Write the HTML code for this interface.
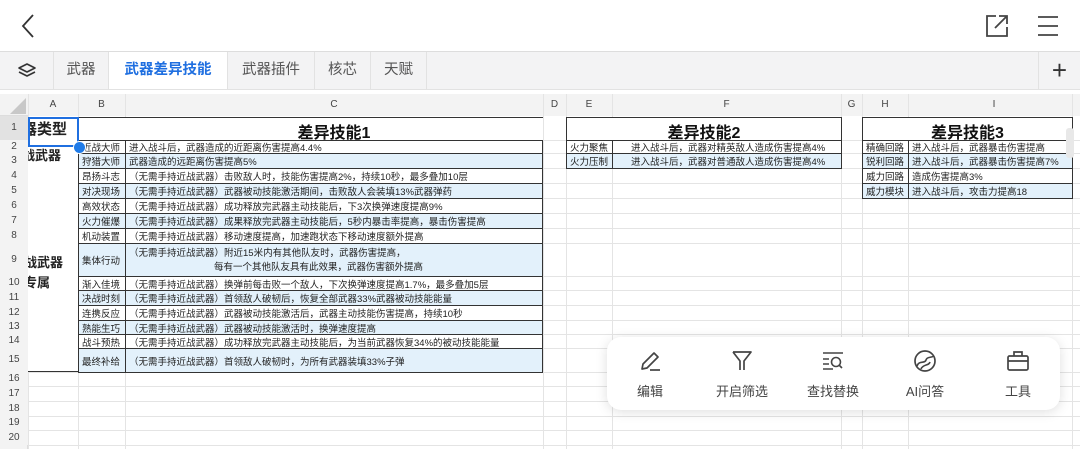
<!DOCTYPE html>
<html><head><meta charset="utf-8">
<style>
*{margin:0;padding:0;box-sizing:border-box}
body{width:1080px;height:449px;overflow:hidden;background:#fff;font-family:"Liberation Sans","Noto Sans CJK SC",sans-serif;position:relative;color:#222}
.a{position:absolute}
.h{position:absolute;left:0;width:1080px;height:1px;background:#e4e4e4}
.v{position:absolute;top:94px;height:355px;width:1px;background:#e4e4e4}
.rn{position:absolute;left:0;width:28px;text-align:center;font-size:10px;color:#444;background:#f3f3f3}
.ch{position:absolute;top:94px;height:22px;font-size:10px;color:#444;text-align:center;line-height:22px;background:#f3f3f3}
.c{position:absolute;border:1px solid #333;font-size:9.5px;white-space:nowrap;overflow:hidden;padding-left:3px;display:flex;align-items:center;background:#fff;color:#222}
.b{background:#e3f1fb}
.hd{position:absolute;font-weight:bold;font-size:15px;text-align:center;color:#111}
.tab{position:absolute;top:52px;height:37px;line-height:37px;font-size:14.5px;color:#555;text-align:center;border-right:1px solid #e2e2e2}
.tb{position:absolute;top:337px;width:90px;text-align:center;font-size:13px;color:#444}
.tb svg{display:block;margin:0 auto 8px}
</style></head><body>
<!-- top bar -->
<svg class="a" style="left:18px;top:13px" width="20" height="26"><path d="M15 2 L5 13 L15 24" stroke="#333" stroke-width="1.8" fill="none"/></svg>
<svg class="a" style="left:985px;top:14px" width="24" height="24"><path d="M11 2H2V22H22V13" stroke="#444" stroke-width="1.8" fill="none"/><path d="M10 14L21 3M14 2H22V10" stroke="#444" stroke-width="1.8" fill="none"/></svg>
<svg class="a" style="left:1037px;top:15px" width="22" height="22"><path d="M1 2H21M1 11H21M1 20H21" stroke="#444" stroke-width="1.8"/></svg>
<!-- tab bar -->
<div class="a" style="left:0;top:51px;width:1080px;height:39px;background:#f3f3f4;border-top:1px solid #ddd;border-bottom:1px solid #e2e2e2"></div>
<div class="tab" style="left:0;width:54px"><svg style="margin-top:10px" width="20" height="18"><path d="M10 2L18 6L10 10L2 6Z" stroke="#333" stroke-width="1.6" fill="none" stroke-linejoin="round"/><path d="M2 10L10 14L18 10" stroke="#333" stroke-width="1.6" fill="none" stroke-linejoin="round"/></svg></div>
<div class="tab" style="left:54px;width:55px">武器</div>
<div class="tab" style="left:109px;width:119px;background:#fff;color:#1f6fe0;font-weight:bold">武器差异技能</div>
<div class="tab" style="left:228px;width:87px">武器插件</div>
<div class="tab" style="left:315px;width:56px">核芯</div>
<div class="tab" style="left:371px;width:56px">天赋</div>
<div class="tab" style="left:1038px;width:42px;border-left:1px solid #e2e2e2;border-right:none;font-size:26px;color:#333;font-weight:300">+</div>
<!-- headers -->
<div class="a" style="left:0;top:94px;width:1080px;height:22px;background:#f3f3f3;border-bottom:1px solid #ddd"></div>
<svg class="a" style="left:6px;top:98px" width="20" height="16"><path d="M20 0V16H4Z" fill="#c8c8c8"/></svg>
<div class="ch" style="left:28px;width:50px">A</div>
<div class="ch" style="left:78px;width:47px">B</div>
<div class="ch" style="left:125px;width:418px">C</div>
<div class="ch" style="left:543px;width:23px">D</div>
<div class="ch" style="left:566px;width:46px">E</div>
<div class="ch" style="left:612px;width:229px">F</div>
<div class="ch" style="left:841px;width:21px">G</div>
<div class="ch" style="left:862px;width:46px">H</div>
<div class="ch" style="left:908px;width:172px">I</div>
<!-- grid -->
<div class="h" style="top:140px"></div><div class="h" style="top:153px"></div><div class="h" style="top:168px"></div><div class="h" style="top:183px"></div><div class="h" style="top:198px"></div><div class="h" style="top:213px"></div><div class="h" style="top:228px"></div><div class="h" style="top:243px"></div><div class="h" style="top:276px"></div><div class="h" style="top:290px"></div><div class="h" style="top:305px"></div><div class="h" style="top:320px"></div><div class="h" style="top:334px"></div><div class="h" style="top:348px"></div><div class="h" style="top:372px"></div><div class="h" style="top:386px"></div><div class="h" style="top:401px"></div><div class="h" style="top:416px"></div><div class="h" style="top:430px"></div><div class="h" style="top:445px"></div>
<div class="v" style="left:28px"></div><div class="v" style="left:78px"></div><div class="v" style="left:125px"></div><div class="v" style="left:543px"></div><div class="v" style="left:566px"></div><div class="v" style="left:612px"></div><div class="v" style="left:841px"></div><div class="v" style="left:862px"></div><div class="v" style="left:908px"></div><div class="v" style="left:1072px"></div>
<!-- row numbers -->
<div class="a" style="left:0;top:116px;width:28px;height:333px;background:#f3f3f3;border-right:1px solid #ddd"></div>
<div class="rn" style="top:116px;height:24px;line-height:24px;background:#e2e2e2">1</div>
<div class="rn" style="top:140px;line-height:13px">2</div>
<div class="rn" style="top:153px;line-height:15px">3</div>
<div class="rn" style="top:168px;line-height:15px">4</div>
<div class="rn" style="top:183px;line-height:15px">5</div>
<div class="rn" style="top:198px;line-height:15px">6</div>
<div class="rn" style="top:213px;line-height:15px">7</div>
<div class="rn" style="top:228px;line-height:15px">8</div>
<div class="rn" style="top:243px;line-height:33px">9</div>
<div class="rn" style="top:276px;line-height:14px">10</div>
<div class="rn" style="top:290px;line-height:15px">11</div>
<div class="rn" style="top:305px;line-height:15px">12</div>
<div class="rn" style="top:320px;line-height:14px">13</div>
<div class="rn" style="top:334px;line-height:14px">14</div>
<div class="rn" style="top:348px;line-height:24px">15</div>
<div class="rn" style="top:372px;line-height:14px">16</div>
<div class="rn" style="top:386px;line-height:15px">17</div>
<div class="rn" style="top:401px;line-height:15px">18</div>
<div class="rn" style="top:416px;line-height:14px">19</div>
<div class="rn" style="top:430px;line-height:15px">20</div>
<!-- table 1 -->
<div class="a" style="left:28px;top:117px;width:515px;height:24px;background:#fff;border-bottom:1.5px solid #333;border-top:1.5px solid #333"></div>
<div class="hd" style="left:125px;top:119px;width:418px;font-size:16px">差异技能1</div>
<div class="a" style="left:28px;top:140px;width:51px;height:232px;background:#fff;border-right:1.5px solid #333;border-bottom:1.5px solid #333"></div>
<div class="a" style="left:28px;top:118px;width:50px;font-weight:bold;font-size:15px;overflow:hidden;white-space:nowrap"><span style="margin-left:-6px">器类型</span></div>
<div class="a" style="left:28px;top:145px;width:50px;font-weight:bold;font-size:13px;overflow:hidden;white-space:nowrap"><span style="margin-left:-6px">战武器</span></div>
<div class="a" style="left:28px;top:253px;width:50px;font-weight:bold;font-size:13px;line-height:20px;overflow:hidden;white-space:nowrap"><span style="margin-left:-4px">战武器</span><br><span style="margin-left:-4px">专属</span></div>
<div class="c" style="left:78px;top:140px;width:48px;height:14px">近战大师</div><div class="c" style="left:125px;top:140px;width:418px;height:14px">进入战斗后，武器造成的近距离伤害提高4.4%</div>
<div class="c b" style="left:78px;top:153px;width:48px;height:16px">狩猎大师</div><div class="c b" style="left:125px;top:153px;width:418px;height:16px">武器造成的远距离伤害提高5%</div>
<div class="c" style="left:78px;top:168px;width:48px;height:16px">昂扬斗志</div><div class="c" style="left:125px;top:168px;width:418px;height:16px">（无需手持近战武器）击败敌人时，技能伤害提高2%，持续10秒，最多叠加10层</div>
<div class="c b" style="left:78px;top:183px;width:48px;height:16px">对决现场</div><div class="c b" style="left:125px;top:183px;width:418px;height:16px">（无需手持近战武器）武器被动技能激活期间，击败敌人会装填13%武器弹药</div>
<div class="c" style="left:78px;top:198px;width:48px;height:16px">高效状态</div><div class="c" style="left:125px;top:198px;width:418px;height:16px">（无需手持近战武器）成功释放完武器主动技能后，下3次换弹速度提高9%</div>
<div class="c b" style="left:78px;top:213px;width:48px;height:16px">火力催爆</div><div class="c b" style="left:125px;top:213px;width:418px;height:16px">（无需手持近战武器）成果释放完武器主动技能后，5秒内暴击率提高，暴击伤害提高</div>
<div class="c" style="left:78px;top:228px;width:48px;height:16px">机动装置</div><div class="c" style="left:125px;top:228px;width:418px;height:16px">（无需手持近战武器）移动速度提高，加速跑状态下移动速度额外提高</div>
<div class="c b" style="left:78px;top:243px;width:48px;height:34px">集体行动</div><div class="c b" style="left:125px;top:243px;width:418px;height:34px;white-space:normal;line-height:14px;display:block;padding-top:3px">（无需手持近战武器）附近15米内有其他队友时，武器伤害提高，<br><span style="padding-left:85px">每有一个其他队友具有此效果，武器伤害额外提高</span></div>
<div class="c" style="left:78px;top:276px;width:48px;height:15px">渐入佳境</div><div class="c" style="left:125px;top:276px;width:418px;height:15px">（无需手持近战武器）换弹前每击败一个敌人，下次换弹速度提高1.7%，最多叠加5层</div>
<div class="c b" style="left:78px;top:290px;width:48px;height:16px">决战时刻</div><div class="c b" style="left:125px;top:290px;width:418px;height:16px">（无需手持近战武器）首领敌人破韧后，恢复全部武器33%武器被动技能能量</div>
<div class="c" style="left:78px;top:305px;width:48px;height:16px">连携反应</div><div class="c" style="left:125px;top:305px;width:418px;height:16px">（无需手持近战武器）武器被动技能激活后，武器主动技能伤害提高，持续10秒</div>
<div class="c b" style="left:78px;top:320px;width:48px;height:15px">熟能生巧</div><div class="c b" style="left:125px;top:320px;width:418px;height:15px">（无需手持近战武器）武器被动技能激活时，换弹速度提高</div>
<div class="c" style="left:78px;top:334px;width:48px;height:15px">战斗预热</div><div class="c" style="left:125px;top:334px;width:418px;height:15px">（无需手持近战武器）成功释放完武器主动技能后，为当前武器恢复34%的被动技能能量</div>
<div class="c b" style="left:78px;top:348px;width:48px;height:25px">最终补给</div><div class="c b" style="left:125px;top:348px;width:418px;height:25px">（无需手持近战武器）首领敌人破韧时，为所有武器装填33%子弹</div>
<!-- selection -->
<div class="a" style="left:28px;top:117px;width:51px;height:30px;border:2px solid #1f6fe0"></div>
<div class="a" style="left:73px;top:141px;width:13px;height:13px;border-radius:50%;background:#1f7be8;border:1.5px solid #fff"></div>
<!-- table 2 -->
<div class="c" style="left:566px;top:117px;width:276px;height:24px;border-width:1.5px"></div>
<div class="hd" style="left:566px;top:119px;width:276px;font-size:16px">差异技能2</div>
<div class="c" style="left:566px;top:140px;width:47px;height:14px">火力聚焦</div><div class="c" style="left:612px;top:140px;width:230px;height:14px;padding-left:18px">进入战斗后，武器对精英敌人造成伤害提高4%</div>
<div class="c b" style="left:566px;top:153px;width:47px;height:16px">火力压制</div><div class="c b" style="left:612px;top:153px;width:230px;height:16px;padding-left:18px">进入战斗后，武器对普通敌人造成伤害提高4%</div>
<!-- table 3 -->
<div class="c" style="left:862px;top:117px;width:211px;height:24px;border-width:1.5px"></div>
<div class="hd" style="left:862px;top:119px;width:211px;font-size:16px">差异技能3</div>
<div class="c" style="left:862px;top:140px;width:47px;height:14px">精确回路</div><div class="c" style="left:908px;top:140px;width:165px;height:14px">进入战斗后，武器暴击伤害提高</div>
<div class="c b" style="left:862px;top:153px;width:47px;height:16px">锐利回路</div><div class="c b" style="left:908px;top:153px;width:165px;height:16px">进入战斗后，武器暴击伤害提高7%</div>
<div class="c" style="left:862px;top:168px;width:47px;height:16px">威力回路</div><div class="c" style="left:908px;top:168px;width:165px;height:16px">造成伤害提高3%</div>
<div class="c b" style="left:862px;top:183px;width:47px;height:16px">威力模块</div><div class="c b" style="left:908px;top:183px;width:165px;height:16px">进入战斗后，攻击力提高18</div>
<div class="a" style="left:1066px;top:128px;width:8px;height:30px;background:#e8e8e8;border-radius:3px"></div>
<!-- toolbar -->
<div class="a" style="left:607px;top:337px;width:453px;height:73px;background:#fff;border-radius:14px;box-shadow:0 2px 12px rgba(0,0,0,0.13)"></div>
<div class="tb" style="left:605px;top:349px"><svg width="24" height="24"><path d="M4 20L5 15L16 4L20 8L9 19Z" stroke="#444" stroke-width="1.7" fill="none" stroke-linejoin="round"/><path d="M12 21H22" stroke="#444" stroke-width="1.7"/></svg>编辑</div>
<div class="tb" style="left:697px;top:349px"><svg width="24" height="24"><path d="M3 3H21L14 12V21M10 21V12L3 3" stroke="#444" stroke-width="1.7" fill="none" stroke-linejoin="round"/></svg>开启筛选</div>
<div class="tb" style="left:788px;top:349px"><svg width="24" height="24"><path d="M2 4H22M2 10H8M2 15H8M2 20H12" stroke="#444" stroke-width="1.6"/><circle cx="15" cy="13" r="4.5" stroke="#444" stroke-width="1.6" fill="none"/><path d="M18 16L21 19" stroke="#444" stroke-width="1.6"/></svg>查找替换</div>
<div class="tb" style="left:880px;top:349px"><svg width="24" height="24"><circle cx="12" cy="12" r="10" stroke="#444" stroke-width="1.7" fill="none"/><path d="M4 17C6 11 12 15 13 11C14 7 20 9 20 7M8 20C10 15 16 17 17 13" stroke="#444" stroke-width="1.6" fill="none"/></svg>AI问答</div>
<div class="tb" style="left:973px;top:349px"><svg width="24" height="24"><rect x="2" y="7" width="20" height="14" rx="1.5" stroke="#444" stroke-width="1.7" fill="none"/><path d="M8 7V3H16V7M2 12H22" stroke="#444" stroke-width="1.7" fill="none"/></svg>工具</div>
</body></html>
